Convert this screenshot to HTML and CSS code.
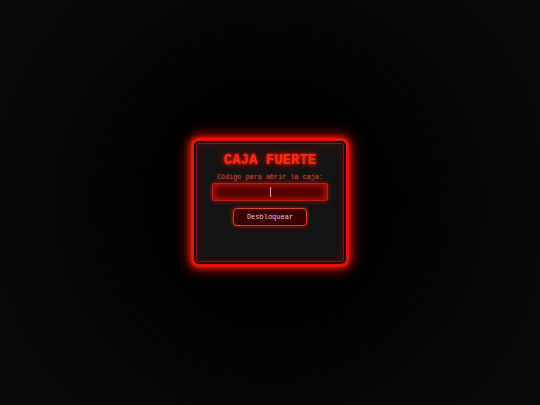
FILE: index.html
```html
<!DOCTYPE html>
<html lang="es">
<head>
<meta charset="utf-8">
<title>Caja Fuerte</title>
<link rel="stylesheet" href="styles.css">
</head>
<body>
<main class="scene">
  <section class="safe">
    <h1 class="safe-title">CAJA FUERTE</h1>
    <label class="safe-label" for="code">Código para abrir la caja:</label>
    <div class="safe-input"><span class="caret"></span></div>
    <button class="safe-button" type="button">Desbloquear</button>
  </section>
</main>
</body>
</html>
```
FILE: styles.css
```css
html, body {
  margin: 0;
  padding: 0;
  width: 100%;
  height: 100%;
}
body {
  background: #0b0a0a;
  font-family: "Liberation Mono", "DejaVu Sans Mono", monospace;
  overflow: hidden;
}
.scene {
  width: 540px;
  height: 405px;
  display: flex;
  align-items: center;
  justify-content: center;
  background:
    repeating-radial-gradient(circle at 50% 50%, rgba(255,255,255,0) 0, rgba(255,255,255,0) 36px, rgba(255,255,255,0.004) 40px, rgba(255,255,255,0) 44px),
    radial-gradient(circle at 50% 50%, #000 0, #000 110px, #040303 170px, #080707 240px, #0b0a0a 330px);
}
.safe {
  box-sizing: border-box;
  width: 158px;
  height: 129px;
  border: 3px solid #e01608;
  border-radius: 8px;
  background: #141313;
  box-shadow:
    0 0 6px 1px rgba(255, 30, 10, 0.9),
    0 0 14px 4px rgba(220, 10, 0, 0.55),
    inset 0 0 0 2px #1a0c0b,
    inset 0 0 0 3px #7a1a10,
    inset 0 0 10px 4px rgba(120, 10, 0, 0.35);
  display: flex;
  flex-direction: column;
  align-items: center;
  padding: 11px 18px 0;
}
.safe-title {
  margin: 0;
  font-size: 14px;
  line-height: 16px;
  font-weight: bold;
  color: #ff2a14;
  text-shadow: 0 0 3px #ff2000, 0 0 8px rgba(255, 0, 0, 0.9);
  letter-spacing: 0;
}
.safe-label {
  margin-top: 5px;
  font-size: 6.8px;
  line-height: 9px;
  color: #c8462a;
  text-shadow: 0 0 2px rgba(255, 40, 0, 0.6);
}
.safe-input {
  box-sizing: border-box;
  margin-top: 1px;
  width: 116px;
  height: 18px;
  border: 1px solid #c81a0a;
  border-radius: 2px;
  background: #4c0200;
  box-shadow: inset 0 0 6px 2px #b01206, 0 0 5px rgba(255, 20, 0, 0.6);
  display: flex;
  align-items: center;
  justify-content: center;
}
.caret {
  width: 1px;
  height: 10px;
  background: #e8a0a0;
}
.safe-button {
  box-sizing: border-box;
  margin-top: 7px;
  width: 74px;
  height: 18px;
  padding: 0;
  border: 1px solid #e8401c;
  border-radius: 4px;
  background: #3a0000;
  color: #f0c8c8;
  font-family: "Liberation Mono", "DejaVu Sans Mono", monospace;
  font-size: 7px;
  line-height: 16px;
  box-shadow: 0 0 4px rgba(255, 40, 0, 0.7);
}
```
